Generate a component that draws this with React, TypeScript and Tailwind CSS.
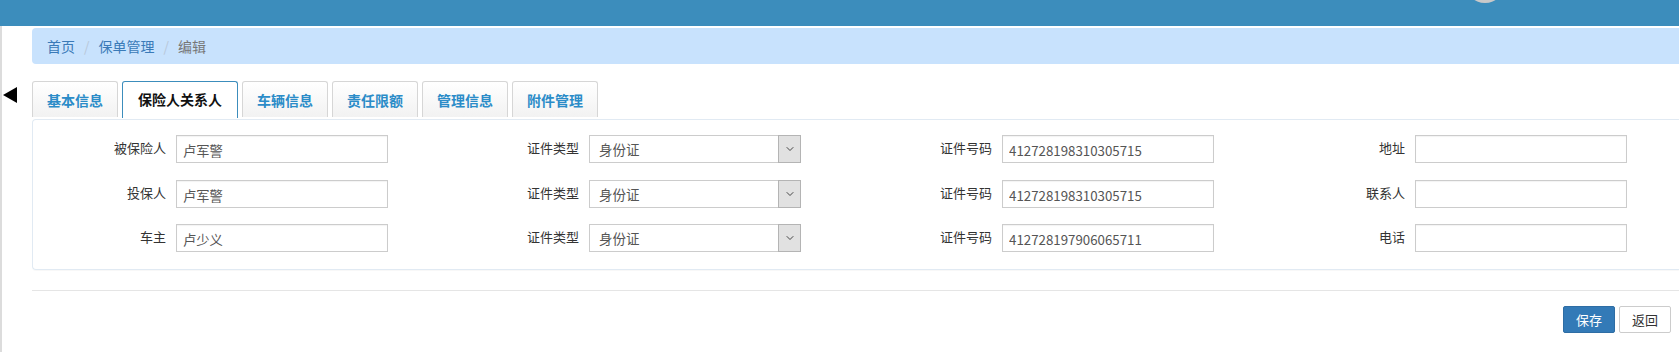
import { ChevronDown } from 'lucide-react'

interface Field {
  label: string
  value?: string
  kind?: 'input' | 'select'
}

const rows: Field[][] = [
  [
    { label: '被保险人', value: '卢军警' },
    { label: '证件类型', value: '身份证', kind: 'select' },
    { label: '证件号码', value: '412728198310305715' },
    { label: '地址', value: '' },
  ],
  [
    { label: '投保人', value: '卢军警' },
    { label: '证件类型', value: '身份证', kind: 'select' },
    { label: '证件号码', value: '412728198310305715' },
    { label: '联系人', value: '' },
  ],
  [
    { label: '车主', value: '卢少义' },
    { label: '证件类型', value: '身份证', kind: 'select' },
    { label: '证件号码', value: '412728197906065711' },
    { label: '电话', value: '' },
  ],
]

const tabs = ['基本信息', '保险人关系人', '车辆信息', '责任限额', '管理信息', '附件管理']

function FormGroup({ field }: { field: Field }) {
  return (
    <div className="flex w-[413px] shrink-0">
      <label className="w-[120px] pt-[3px] text-right text-[13px] leading-[20px] text-[#333]">
        {field.label}
      </label>
      {field.kind === 'select' ? (
        <div className="ml-[10px] flex h-[28px] w-[212px] items-stretch border border-[#ccc] bg-white">
          <span className="flex-1 pl-[9px] pt-[4px] text-[13.5px] leading-[19px] text-[#555]">{field.value}</span>
          <span className="-my-px -mr-px flex w-[23px] items-center justify-center border border-[#b4b4b4] bg-[#e1e1e1]">
            <ChevronDown className="h-[12px] w-[12px] text-[#333]" strokeWidth={1.8} />
          </span>
        </div>
      ) : (
        <input
          readOnly
          value={field.value}
          className="ml-[10px] h-[28px] w-[212px] border border-[#ccc] bg-white px-[6px] pt-[2px] text-[13.3px] text-[#555] shadow-[inset_0_1px_1px_rgba(0,0,0,0.05)] outline-none"
        />
      )}
    </div>
  )
}

export default function App() {
  return (
    <div
      className="relative h-[352px] w-full overflow-hidden bg-white"
      style={{ fontFamily: '"Noto Sans CJK SC", "Liberation Sans", sans-serif' }}
    >
      {/* top bar */}
      <div className="relative h-[26px] bg-[#3c8dbc]">
        <div className="absolute left-[1465px] top-[-37px] h-[40px] w-[40px] rounded-full bg-[#c9c9c9]" />
      </div>

      <div className="flex">
        {/* collapsed sidebar */}
        <div className="h-[326px] w-[32px] shrink-0 border-l-2 border-[#dcdcdc] pt-[61px]">
          <div className="ml-[1px] h-0 w-0 border-y-[8.5px] border-r-[14px] border-y-transparent border-r-black" />
        </div>

        <div className="min-w-0 flex-1 pt-[2px]">
          {/* breadcrumb */}
          <div className="flex h-[36px] items-center rounded-l-[4px] bg-[#c8e2fd] pl-[15px] text-[14px] text-[#3a7ab8]">
            <span>首页</span>
            <span className="mx-[9px] text-[#b8c8da]">/</span>
            <span>保单管理</span>
            <span className="mx-[9px] text-[#b8c8da]">/</span>
            <span className="text-[#777]">编辑</span>
          </div>

          {/* tabs */}
          <div className="mt-[17px] flex gap-[4px]">
            {tabs.map((t, i) =>
              i === 1 ? (
                <div
                  key={t}
                  className="flex h-[37px] items-center rounded-t-[3px] border border-b-0 border-[#3c8dbc] bg-white px-[15px] pb-[2px] text-[14px] font-bold text-[#111]"
                >
                  {t}
                </div>
              ) : (
                <div
                  key={t}
                  className="flex h-[36px] items-center rounded-t-[3px] border border-b-0 border-[#d6d6d6] bg-gradient-to-b from-white to-[#f2f2f2] px-[14px] pt-[1px] text-[14px] font-bold text-[#2b8cc8]"
                >
                  {t}
                </div>
              )
            )}
          </div>

          {/* form panel */}
          <div className="mt-[1px] rounded-l-[4px] border border-r-0 border-[#e1eaf3] pb-[17px] pl-[13px] pt-[15px] shadow-[0_1px_1px_rgba(0,0,0,0.03)]">
            {rows.map((row, ri) => (
              <div key={ri} className={`flex ${ri === 1 ? 'mt-[17px]' : ri === 2 ? 'mt-[16px]' : ''}`}>
                {row.map((f, fi) => (
                  <FormGroup key={fi} field={f} />
                ))}
              </div>
            ))}
          </div>

          <div className="mt-[20px] border-t border-[#e5e5e5]" />

          {/* actions */}
          <div className="mt-[15px] flex justify-end gap-[4px] pr-[8px]">
            <button className="h-[27px] w-[52px] rounded-[2px] border border-[#2e6da4] bg-[#337ab7] text-[13px] text-white">
              保存
            </button>
            <button className="h-[27px] w-[52px] rounded-[2px] border border-[#ccc] bg-white text-[13px] text-[#333]">
              返回
            </button>
          </div>
        </div>
      </div>
    </div>
  )
}
